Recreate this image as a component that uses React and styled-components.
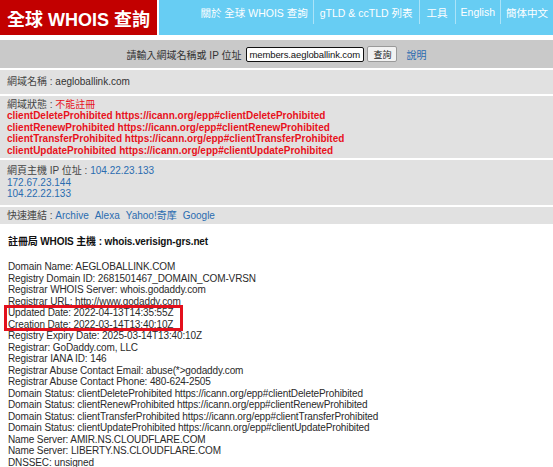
import React from "react";
import styled, { createGlobalStyle } from "styled-components";

const Global = createGlobalStyle`
  html, body { margin: 0; padding: 0; background: #fff; }
  body { font-family: "Liberation Sans", Arial, "Noto Sans CJK TC", sans-serif; font-size: 10px; color: #333; }
  * { box-sizing: border-box; }
`;

const Page = styled.div`
  width: 553px;
  height: 467px;
  overflow: hidden;
`;

const Header = styled.div`
  display: flex;
  height: 35px;
  gap: 2px;
`;

const Logo = styled.div`
  width: 157px;
  background: #c20000;
  color: #fff;
  font-weight: bold;
  font-size: 18px;
  display: flex;
  align-items: center;
  padding-left: 7px;
  white-space: nowrap;
`;

const Nav = styled.div`
  flex: 1;
  background: #67cdf3;
  display: flex;
  justify-content: flex-end;
  align-items: flex-start;
`;

const NavItem = styled.a`
  color: #fff;
  font-size: 10.5px;
  height: 24px;
  display: flex;
  align-items: center;
  padding: 0 ${p => p.$pad || 5}px;
  border-left: ${p => (p.$first ? "none" : "1px solid rgba(255,255,255,0.45)")};
  white-space: nowrap;
  text-decoration: none;
`;

const SearchBar = styled.div`
  margin-top: 5px;
  height: 28px;
  background: #c9c9c9;
  display: flex;
  align-items: center;
  justify-content: center;
  gap: 3px;
  color: #333;
  font-size: 10px;
`;

const SearchInput = styled.div`
  width: 118px;
  height: 15px;
  border: 1px solid #111;
  border-radius: 2px;
  background: #fff;
  color: #111;
  font-size: 9.5px;
  letter-spacing: -0.1px;
  line-height: 13px;
  padding-left: 2px;
  margin-left: 2px;
  white-space: nowrap;
  overflow: hidden;
`;

const SearchButton = styled.div`
  height: 16px;
  padding: 0 5px;
  border: 1px solid #999;
  border-radius: 2px;
  background: #f2f2f2;
  color: #222;
  font-size: 9px;
  display: flex;
  align-items: center;
`;

const Link = styled.span`
  color: #2a6cb0;
`;

const HelpLink = styled(Link)`
  margin-left: 6px;
`;

const Panel = styled.div`
  margin-top: 2px;
  background: #e1e1e1;
  padding: ${p => p.$pad || "6px 7px"};
  line-height: 11.5px;
  color: #333;
`;

const Label = styled.span`
  color: #444;
`;

const Red = styled.span`
  color: #e8121c;
`;

const Status = styled.div`
  color: #e8121c;
  font-weight: bold;
  font-size: 10px;
`;

const Quick = styled(Link)`
  margin-right: 6px;
`;

const Whois = styled.div`
  padding: 9px 8px 0;
  color: #2a2a2a;
  letter-spacing: -0.12px;
`;

const WhoisTitle = styled.div`
  font-weight: bold;
  font-size: 10px;
  color: #111;
  margin-bottom: 13px;
`;

const Lines = styled.div`
  line-height: 11.5px;
`;

const Highlight = styled.div`
  position: relative;
  width: fit-content;
  &::after {
    content: "";
    position: absolute;
    top: -2px;
    left: -4px;
    right: -10px;
    bottom: -1px;
    border: 3px solid #e3101c;
    pointer-events: none;
  }
`;

const before = [
  "Domain Name: AEGLOBALLINK.COM",
  "Registry Domain ID: 2681501467_DOMAIN_COM-VRSN",
  "Registrar WHOIS Server: whois.godaddy.com",
  "Registrar URL: http://www.godaddy.com",
];
const marked = [
  "Updated Date: 2022-04-13T14:35:55Z",
  "Creation Date: 2022-03-14T13:40:10Z",
];
const after = [
  "Registry Expiry Date: 2025-03-14T13:40:10Z",
  "Registrar: GoDaddy.com, LLC",
  "Registrar IANA ID: 146",
  "Registrar Abuse Contact Email: abuse(*>godaddy.com",
  "Registrar Abuse Contact Phone: 480-624-2505",
  "Domain Status: clientDeleteProhibited https://icann.org/epp#clientDeleteProhibited",
  "Domain Status: clientRenewProhibited https://icann.org/epp#clientRenewProhibited",
  "Domain Status: clientTransferProhibited https://icann.org/epp#clientTransferProhibited",
  "Domain Status: clientUpdateProhibited https://icann.org/epp#clientUpdateProhibited",
  "Name Server: AMIR.NS.CLOUDFLARE.COM",
  "Name Server: LIBERTY.NS.CLOUDFLARE.COM",
  "DNSSEC: unsigned",
];

const statuses = ["Delete", "Renew", "Transfer", "Update"];

export default function App() {
  return (
    <Page>
      <Global />
      <Header>
        <Logo>全球 WHOIS 查詢</Logo>
        <Nav>
          <NavItem $first>關於 全球 WHOIS 查詢</NavItem>
          <NavItem $pad={6}>gTLD &amp; ccTLD 列表</NavItem>
          <NavItem $pad={7}>工具</NavItem>
          <NavItem>English</NavItem>
          <NavItem>簡体中文</NavItem>
        </Nav>
      </Header>
      <SearchBar>
        <span>請輸入網域名稱或 IP 位址</span>
        <SearchInput>members.aegloballink.com</SearchInput>
        <SearchButton>查詢</SearchButton>
        <HelpLink>說明</HelpLink>
      </SearchBar>
      <Panel>
        <Label>網域名稱 : </Label>aegloballink.com
      </Panel>
      <Panel $pad="3px 7px 2px">
        <div>
          <Label>網域狀態 : </Label>
          <Red>不能註冊</Red>
        </div>
        {statuses.map(s => (
          <Status key={s}>
            client{s}Prohibited https://icann.org/epp#client{s}Prohibited
          </Status>
        ))}
      </Panel>
      <Panel $pad="5px 7px">
        <div>
          <Label>網頁主機 IP 位址 : </Label>
          <Link>104.22.23.133</Link>
        </div>
        <div><Link>172.67.23.144</Link></div>
        <div><Link>104.22.22.133</Link></div>
      </Panel>
      <Panel $pad="3px 7px">
        <Label>快速連結 : </Label>
        <Quick>Archive</Quick>
        <Quick>Alexa</Quick>
        <Quick>Yahoo!奇摩</Quick>
        <Quick>Google</Quick>
      </Panel>
      <Whois>
        <WhoisTitle>註冊局 WHOIS 主機 : whois.verisign-grs.net</WhoisTitle>
        <Lines>
          {before.map(l => <div key={l}>{l}</div>)}
          <Highlight>
            {marked.map(l => <div key={l}>{l}</div>)}
          </Highlight>
          {after.map(l => <div key={l}>{l}</div>)}
        </Lines>
      </Whois>
    </Page>
  );
}
